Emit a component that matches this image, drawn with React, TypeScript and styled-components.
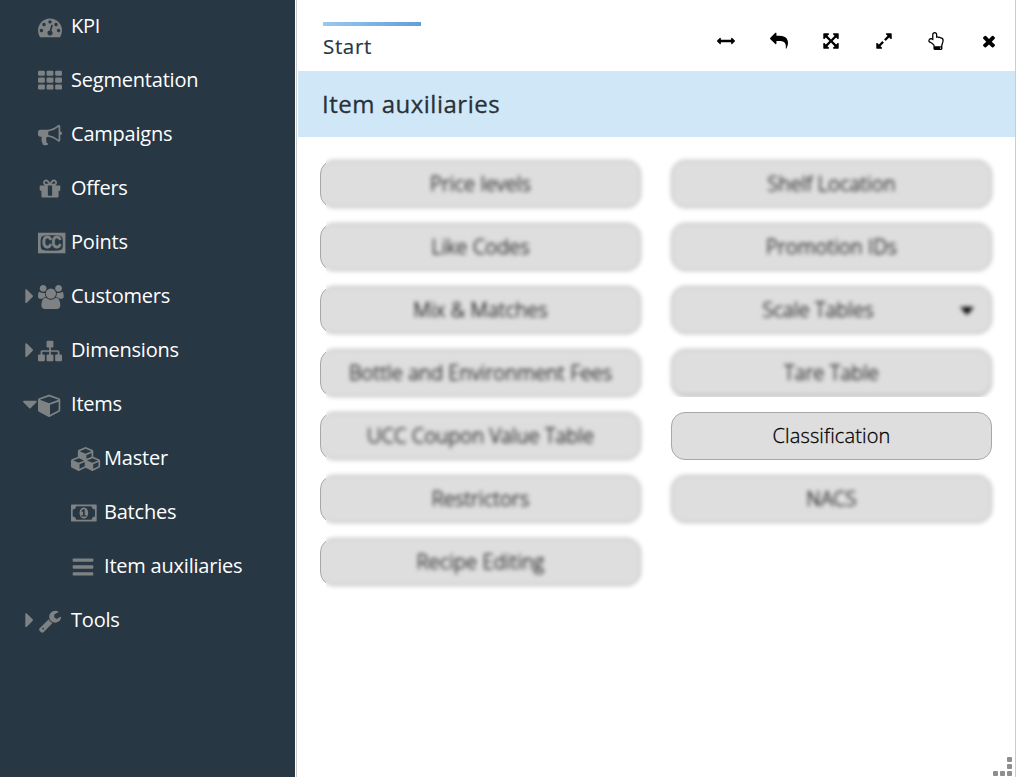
import React from 'react';
import styled, { createGlobalStyle, css } from 'styled-components';

const GlobalStyle = createGlobalStyle`
  * { box-sizing: border-box; }
  html, body { margin: 0; padding: 0; }
  body {
    background: #fff;
    font-family: 'Open Sans', 'Noto Sans', sans-serif;
    overflow: hidden;
  }
  button { font-family: inherit; }
`;

const PATHS = {
  tachometer:
    'M384 1152q0-53-37.5-90.5t-90.5-37.5-90.5 37.5-37.5 90.5 37.5 90.5 90.5 37.5 90.5-37.5 37.5-90.5zm192-448q0-53-37.5-90.5t-90.5-37.5-90.5 37.5-37.5 90.5 37.5 90.5 90.5 37.5 90.5-37.5 37.5-90.5zm428 481l101-382q6-26-7.5-48.5t-38.5-29.5-48 6.5-30 39.5l-101 382q-60 5-107 43.5t-63 98.5q-20 77 20 146t117 89 146-20 89-117q16-60-6-117t-72-91zm660-33q0-53-37.5-90.5t-90.5-37.5-90.5 37.5-37.5 90.5 37.5 90.5 90.5 37.5 90.5-37.5 37.5-90.5zm-640-640q0-53-37.5-90.5t-90.5-37.5-90.5 37.5-37.5 90.5 37.5 90.5 90.5 37.5 90.5-37.5 37.5-90.5zm448 192q0-53-37.5-90.5t-90.5-37.5-90.5 37.5-37.5 90.5 37.5 90.5 90.5 37.5 90.5-37.5 37.5-90.5zm320 448q0 261-141 483-19 29-54 29h-1402q-35 0-54-29-141-221-141-483 0-182 71-348t191-286 286-191 348-71 348 71 286 191 191 286 71 348z',
  bullhorn:
    'M1664 640q53 0 90.5 37.5t37.5 90.5-37.5 90.5-90.5 37.5v384q0 52-38 90t-90 38q-417-347-812-380-58 19-91 66t-31 100.5 40 92.5q-20 33-23 65.5t6 58 33.5 55 48 50 61.5 50.5q-29 58-111.5 83t-168.5 11.5-132-55.5q-7-23-29.5-87.5t-32-94.5-23-89-15-101 3.5-98.5 22-110.5h-122q-66 0-113-47t-47-113v-192q0-66 47-113t113-47h480q435 0 896-384 52 0 90 38t38 90v384zm-128 604v-954q-394 302-768 343v270q377 42 768 341z',
  gift:
    'M1056 1356v-716h-320v716q0 25 18 38.5t46 13.5h192q28 0 46-13.5t18-38.5zm-456-844h195l-126-161q-26-31-69-31-40 0-68 28t-28 68 28 68 68 28zm688-96q0-40-28-68t-68-28q-43 0-69 31l-125 161h194q40 0 68-28t28-68zm376 256v320q0 14-9 23t-23 9h-96v416q0 40-28 68t-68 28h-1088q-40 0-68-28t-28-68v-416h-96q-14 0-23-9t-9-23v-320q0-14 9-23t23-9h440q-93 0-158.5-65.5t-65.5-158.5 65.5-158.5 158.5-65.5q107 0 168 77l128 165 128-165q61-77 168-77 93 0 158.5 65.5t65.5 158.5-65.5 158.5-158.5 65.5h440q14 0 23 9t9 23z',
  users:
    'M593 896q-162 5-265 128h-134q-82 0-138-40.5t-56-118.5q0-353 124-353 6 0 43.5 21t97.5 42.5 119 21.5q67 0 133-23-5 37-5 66 0 159 81 256zm1071 637q0 120-73 189.5t-194 69.5h-874q-121 0-194-69.5t-73-189.5q0-53 3.5-103.5t14-109 26.5-108.5 43-97.5 62-81 85.5-53.5 111.5-20q10 0 43 21.5t73 48 107 48 135 21.5 135-21.5 107-48 73-48 43-21.5q61 0 111.5 20t85.5 53.5 62 81 43 97.5 26.5 108.5 14 109 3.5 103.5zm-1024-1277q0 106-75 181t-181 75-181-75-75-181 75-181 181-75 181 75 75 181zm704 384q0 159-112.5 271.5t-271.5 112.5-271.5-112.5-112.5-271.5 112.5-271.5 271.5-112.5 271.5 112.5 112.5 271.5zm576 225q0 78-56 118.5t-138 40.5h-134q-103-123-265-128 81-97 81-256 0-29-5-66 66 23 133 23 59 0 119-21.5t97.5-42.5 43.5-21q124 0 124 353zm-128-609q0 106-75 181t-181 75-181-75-75-181 75-181 181-75 181 75 75 181z',
  sitemap:
    'M1792 1248v320q0 40-28 68t-68 28h-320q-40 0-68-28t-28-68v-320q0-40 28-68t68-28h96v-192h-512v192h96q40 0 68 28t28 68v320q0 40-28 68t-68 28h-320q-40 0-68-28t-28-68v-320q0-40 28-68t68-28h96v-192h-512v192h96q40 0 68 28t28 68v320q0 40-28 68t-68 28h-320q-40 0-68-28t-28-68v-320q0-40 28-68t68-28h96v-192q0-52 38-90t90-38h512v-192h-96q-40 0-68-28t-28-68v-320q0-40 28-68t68-28h320q40 0 68 28t28 68v320q0 40-28 68t-68 28h-96v192h512q52 0 90 38t38 90v192h96q40 0 68 28t28 68z',
  cube:
    'M896 1629l640-349v-636l-640 233v752zm-64-865l698-254-698-254-698 254zm832-252v768q0 35-18 65t-49 47l-704 384q-28 16-61 16t-61-16l-704-384q-31-17-49-47t-18-65v-768q0-40 23-73t61-47l704-256q22-8 44-8t44 8l704 256q38 14 61 47t23 73z',
  cubes:
    'M640 1632l384-192v-314l-384 164v342zm-64-454l404-173-404-173-404 173zm1088 454l384-192v-314l-384 164v342zm-64-454l404-173-404-173-404 173zm-448-293l384-165v-266l-384 164v267zm-64-379l441-189-441-189-441 189zm1088 518v416q0 36-19 67t-52 47l-448 224q-25 14-57 14t-57-14l-448-224q-4-2-7-4-2 2-7 4l-448 224q-25 14-57 14t-57-14l-448-224q-33-16-52-47t-19-67v-416q0-38 21.5-70t56.5-48l434-186v-400q0-38 21.5-70t56.5-48l448-192q23-10 50-10t50 10l448 192q35 16 56.5 48t21.5 70v400l434 186q36 16 57 48t21 70z',
  money:
    'M768 1152h384v-96h-128v-448h-114l-148 137 77 80q42-37 55-57h2v288h-128v96zm512-256q0 70-21 142t-59.5 134-101.5 101-138 39-138-39-101.5-101-59.5-134-21-142 21-142 59.5-134 101.5-101 138-39 138 39 101.5 101 59.5 134 21 142zm512 256v-512q-106 0-181-75t-75-181h-1152q0 106-75 181t-181 75v512q106 0 181 75t75 181h1152q0-106 75-181t181-75zm128-832v1152q0 26-19 45t-45 19h-1792q-26 0-45-19t-19-45v-1152q0-26 19-45t45-19h1792q26 0 45 19t19 45z',
  wrench:
    'M448 1472q0-26-19-45t-45-19-45 19-19 45 19 45 45 19 45-19 19-45zm644-420l-682 682q-37 37-90 37-52 0-91-37l-106-108q-38-36-38-90 0-53 38-91l681-681q39 98 114.5 173.5t173.5 114.5zm634-435q0 39-23 106-47 134-164.5 217.5t-258.5 83.5q-185 0-316.5-131.5t-131.5-316.5 131.5-316.5 316.5-131.5q58 0 121.5 16.5t107.5 46.5q16 11 16 28t-16 28l-293 169v224l193 107q5-3 79-48.5t135.5-81 70.5-35.5q15 0 23.5 10t8.5 25z',
  arrowsH:
    'M1792 896q0 26-19 45l-256 256q-19 19-45 19t-45-19-19-45v-128h-1024v128q0 26-19 45t-45 19-45-19l-256-256q-19-19-19-45t19-45l256-256q19-19 45-19t45 19 19 45v128h1024v-128q0-26 19-45t45-19 45 19l256 256q19 19 19 45z',
  reply:
    'M1792 1120q0 166-127 451-3 7-10.5 24t-13.5 30-13 22q-12 17-28 17-15 0-23.5-10t-8.5-25q0-9 2.5-26.5t2.5-23.5q5-68 5-123 0-101-17.5-181t-48.5-138.5-80-101-105.5-69.5-133-42.5-154-21.5-175.5-6h-224v256q0 26-19 45t-45 19-45-19l-512-512q-19-19-19-45t19-45l512-512q19-19 45-19t45 19 19 45v256h224q713 0 875 403 53 134 53 333z',
  arrowsAlt:
    'M1411 541l-355 355 355 355 144-144q29-31 70-14 39 17 39 59v448q0 26-19 45t-45 19h-448q-42 0-59-40-17-39 14-69l144-144-355-355-355 355 144 144q31 30 14 69-17 40-59 40h-448q-26 0-45-19t-19-45v-448q0-42 40-59 39-17 69 14l144 144 355-355-355-355-144 144q-19 19-45 19-12 0-24-5-40-17-40-59v-448q0-26 19-45t45-19h448q42 0 59 40 17 39-14 69l-144 144 355 355 355-355-144-144q-31-30-14-69 17-40 59-40h448q26 0 45 19t19 45v448q0 42-39 59-13 5-25 5-26 0-45-19z',
  expand:
    'M883 1056q0 13-10 23l-332 332 144 144q19 19 19 45t-19 45-45 19h-448q-26 0-45-19t-19-45v-448q0-26 19-45t45-19 45 19l144 144 332-332q10-10 23-10t23 10l114 114q10 10 10 23zm781-864v448q0 26-19 45t-45 19-45-19l-144-144-332 332q-10 10-23 10t-23-10l-114-114q-10-10-10-23t10-23l332-332-144-144q-19-19-19-45t19-45 45-19h448q26 0 45 19t19 45z',
  handUp:
    'M1408 1600q0-26-19-45t-45-19-45 19-19 45 19 45 45 19 45-19 19-45zm128-764q0-189-167-189-26 0-56 5-16-30-52.5-47.5t-73.5-17.5-69 18q-50-53-119-53-25 0-55.5 10t-47.5 25v-331q0-52-38-90t-90-38q-51 0-89.5 39t-38.5 89v576q-20 0-48.5-15t-55-33-68-33-84.5-15q-67 0-97.5 44.5t-30.5 115.5q0 24 139 90 44 24 65 37 64 40 145 112 81 71 106 101 57 69 57 140v32h640v-32q0-72 32-167t64-193.5 32-179.5zm128-5q0 133-69 322-59 164-59 223v288q0 53-37.5 90.5t-90.5 37.5h-640q-53 0-90.5-37.5t-37.5-90.5v-288q0-10-4.5-21.5t-14-23.5-18-22.5-22.5-24-21.5-20.5-21.5-19-17-14q-74-65-129-100-21-13-62-33t-72-37-63-40.5-49.5-55-17.5-69.5q0-125 67-206.5t189-81.5q68 0 128 22v-374q0-104 77-180t179-76q105 0 181 75.5t76 180.5v169q62 4 119 37 21-3 43-3 101 0 178 60 139-1 219.5 85t80.5 227z',
  times:
    'M1490 1322q0 40-28 68l-136 136q-28 28-68 28t-68-28l-294-294-294 294q-28 28-68 28t-68-28l-136-136q-28-28-28-68t28-68l294-294-294-294q-28-28-28-68t28-68l136-136q28-28 68-28t68 28l294 294 294-294q28-28 68-28t68 28l136 136q28 28 28 68t-28 68l-294 294 294 294q28 28 28 68z',
};

const GLYPH_WIDTH: Record<string, number> = { users: 1920, money: 1920, cubes: 2304, cc: 2048 };

const Glyph = styled.svg`
  display: block;
  flex: none;
  fill: currentColor;
  overflow: visible;
`;

type IconName = keyof typeof PATHS | 'th' | 'bars' | 'cc';

const Icon = ({ name, size = 24 }: { name: IconName; size?: number }) => {
  const w = GLYPH_WIDTH[name] ?? 1792;
  return (
    <Glyph viewBox={`0 0 ${w} 1792`} width={(w / 1792) * size} height={size} aria-hidden>
      {name === 'th' &&
        [128, 640, 1152].map((y) =>
          [0, 640, 1280].map((x) => <rect key={`${x}-${y}`} x={x} y={y} width="512" height="384" rx="96" />),
        )}
      {name === 'bars' &&
        [256, 768, 1280].map((y) => <rect key={y} x="128" y={y} width="1536" height="256" rx="64" />)}
      {name === 'cc' && (
        <>
          <path
            fillRule="evenodd"
            d="M0 128h2048v1536h-2048zM1024 325q-611 0-697 63-60 38-90 95-45 90-45 413t45 413q30 57 90 95 86 63 697 63t697-63q60-38 90-95 45-90 45-413t-45-413q-30-57-90-95-86-63-697-63z"
          />
          <text
            x="1024"
            y="1305"
            textAnchor="middle"
            textLength="1430"
            lengthAdjust="spacingAndGlyphs"
            fontFamily="Liberation Sans"
            fontWeight="700"
            fontSize="1180"
            stroke="currentColor"
            strokeWidth="70"
          >
            CC
          </text>
        </>
      )}
      {name in PATHS && <path d={PATHS[name as keyof typeof PATHS]} />}
    </Glyph>
  );
};

const Shell = styled.div`
  display: flex;
  width: 1016px;
  height: 777px;
  overflow: hidden;
`;

const Sidebar = styled.nav`
  flex: none;
  width: 295px;
  background: #283744;
  color: #fff;
`;

const NavRow = styled.a<{ $nested?: boolean }>`
  display: flex;
  align-items: center;
  height: 54px;
  padding-left: ${(p) => (p.$nested ? 71 : 38)}px;
  font-size: 20px;
  line-height: 27px;
  letter-spacing: -0.21px;
  white-space: nowrap;
`;

const CaretSlot = styled.span`
  flex: none;
  display: flex;
  width: 15px;
  margin-left: -15px;
  margin-top: -2px;
  color: #7f8283;
`;

const IconSlot = styled.span`
  flex: none;
  display: flex;
  width: 33px;
  margin-top: -1px;
  color: #7f8283;
`;

const NavLabel = styled.span`
  margin-top: -4px;
`;

const Panel = styled.main`
  flex: 1;
  display: flex;
  flex-direction: column;
  margin-left: 1px;
  border-left: 1px solid #ccc;
  border-right: 1px solid #ccc;
  padding-left: 1px;
`;

const Header = styled.header`
  display: flex;
  justify-content: space-between;
  height: 71px;
  padding: 22px 0 0 25px;
`;

const Tab = styled.div`
  width: 98px;
  height: 40px;
  padding-top: 10.5px;
  background: linear-gradient(90deg, #9ac7ee, #5f9fdb) top / 100% 4px no-repeat;
  color: #283744;
  font-size: 20.5px;
  line-height: 27px;
  letter-spacing: 0.65px;
  -webkit-text-stroke: 0.2px currentColor;
`;

const Toolbar = styled.div`
  display: flex;
  height: 38px;
  color: #000;
`;

const ToolButton = styled.button`
  display: flex;
  align-items: center;
  justify-content: center;
  width: 52.5px;
  padding: 0;
  border: 0;
  background: none;
  color: inherit;
`;

const TitleBar = styled.h1`
  display: flex;
  align-items: center;
  height: 66px;
  margin: 0;
  padding: 0 0 2px 24px;
  background: #d0e7f7;
  color: #283138;
  font-size: 24px;
  font-weight: 500;
  letter-spacing: 0.5px;
  -webkit-text-stroke: 0.3px currentColor;
`;

const Board = styled.section`
  flex: 1;
  display: grid;
  grid-template-columns: 321px 321px;
  grid-auto-rows: 48px;
  align-content: start;
  gap: 15px 30px;
  padding: 23px 22px;
`;

const face = css`
  border: 1px solid #a8a8a8;
  border-radius: 14px;
  background: #dedede;
`;

const TileCell = styled.div<{ $edge?: boolean }>`
  position: relative;
  ${(p) =>
    p.$edge &&
    css`
      &::before {
        content: '';
        position: absolute;
        inset: 0;
        ${face}
        clip-path: inset(0 calc(100% - 6px) 0 0);
      }
    `}
`;

const TileMask = styled.div<{ $left: number; $bottom: number }>`
  height: 100%;
  clip-path: inset(-8px -8px ${(p) => p.$bottom}px ${(p) => p.$left}px);
`;

const Tile = styled.button<{ $blurred: boolean; $menu?: boolean; $cut?: boolean }>`
  ${face}
  display: flex;
  align-items: center;
  justify-content: center;
  position: relative;
  width: 100%;
  height: 100%;
  padding: 0 ${(p) => (p.$menu ? 27 : 0)}px 1px 0;
  color: #000;
  font-size: 20px;
  font-weight: 300;
  line-height: 26px;
  letter-spacing: 0.14px;
  -webkit-text-stroke: 0.3px currentColor;
  ${(p) => p.$blurred && 'filter: blur(2px);'}
  ${(p) => p.$cut && 'box-shadow: inset 0 -1px #a8a8a8;'}
`;

const MenuCaret = styled.span`
  position: absolute;
  right: 17px;
  top: 20px;
  border: 7px solid transparent;
  border-top: 8px solid #000;
  border-bottom: 0;
`;

const Grip = styled.div`
  align-self: flex-end;
  display: grid;
  grid-template-columns: repeat(3, 5px);
  grid-auto-rows: 5px;
  gap: 2px;
  padding: 0 3px 1px 0;
`;

const Dot = styled.i<{ $last?: boolean }>`
  ${(p) => p.$last && 'grid-column: 3;'}
  border-radius: 1px;
  background: #8e8e8e;
`;

const Caret = ({ open }: { open?: boolean }) => (
  <Glyph width="15" height="24" viewBox="0 0 15 24" aria-hidden>
    {open ? (
      <path d="M.9 8.7h12q.8 0 .9.8 0 .4-.3.7l-6 6q-.6.5-1.2 0l-6-6Q0 9.9 0 9.500q.1-.8.9-.8z" />
    ) : (
      <path d="M2.3 6.200q0-.8.8-.9.4 0 .7.3l6 6q.5.6 0 1.2l-6 6q-.3.3-.7.3-.8-.1-.8-.9z" />
    )}
  </Glyph>
);

type NavItem = { label: string; icon: IconName; caret?: 'open' | 'closed'; nested?: boolean };

const NAV: NavItem[] = [
  { label: 'KPI', icon: 'tachometer' },
  { label: 'Segmentation', icon: 'th' },
  { label: 'Campaigns', icon: 'bullhorn' },
  { label: 'Offers', icon: 'gift' },
  { label: 'Points', icon: 'cc' },
  { label: 'Customers', icon: 'users', caret: 'closed' },
  { label: 'Dimensions', icon: 'sitemap', caret: 'closed' },
  { label: 'Items', icon: 'cube', caret: 'open' },
  { label: 'Master', icon: 'cubes', nested: true },
  { label: 'Batches', icon: 'money', nested: true },
  { label: 'Item auxiliaries', icon: 'bars', nested: true },
  { label: 'Tools', icon: 'wrench', caret: 'closed' },
];

const TOOLS: IconName[] = ['arrowsH', 'reply', 'arrowsAlt', 'expand', 'handUp', 'times'];

const TILES = [
  'Price levels',
  'Shelf Location',
  'Like Codes',
  'Promotion IDs',
  'Mix & Matches',
  'Scale Tables',
  'Bottle and Environment Fees',
  'Tare Table',
  'UCC Coupon Value Table',
  'Classification',
  'Restrictors',
  'NACS',
  'Recipe Editing',
];

export default function App() {
  return (
    <>
      <GlobalStyle />
      <Shell>
        <Sidebar>
          {NAV.map((item) => (
            <NavRow key={item.label} $nested={item.nested}>
              {item.caret && (
                <CaretSlot>
                  <Caret open={item.caret === 'open'} />
                </CaretSlot>
              )}
              <IconSlot>
                <Icon name={item.icon} />
              </IconSlot>
              <NavLabel>{item.label}</NavLabel>
            </NavRow>
          ))}
        </Sidebar>
        <Panel>
          <Header>
            <Tab>Start</Tab>
            <Toolbar>
              {TOOLS.map((name) => (
                <ToolButton key={name} aria-label={name}>
                  <Icon name={name} size={18} />
                </ToolButton>
              ))}
            </Toolbar>
          </Header>
          <TitleBar>Item auxiliaries</TitleBar>
          <Board>
            {TILES.map((label, i) => {
              const sharp = label === 'Classification';
              const leftColumn = i % 2 === 0;
              const cut = label === 'Tare Table';
              return (
                <TileCell key={label} $edge={leftColumn}>
                  <TileMask $left={leftColumn ? 6 : -8} $bottom={cut ? 0 : -8}>
                    <Tile $blurred={!sharp} $menu={label === 'Scale Tables'} $cut={cut}>
                      {label}
                      {label === 'Scale Tables' && <MenuCaret />}
                    </Tile>
                  </TileMask>
                </TileCell>
              );
            })}
          </Board>
          <Grip>
            <Dot $last />
            <Dot $last />
            <Dot />
            <Dot />
            <Dot />
          </Grip>
        </Panel>
      </Shell>
    </>
  );
}
